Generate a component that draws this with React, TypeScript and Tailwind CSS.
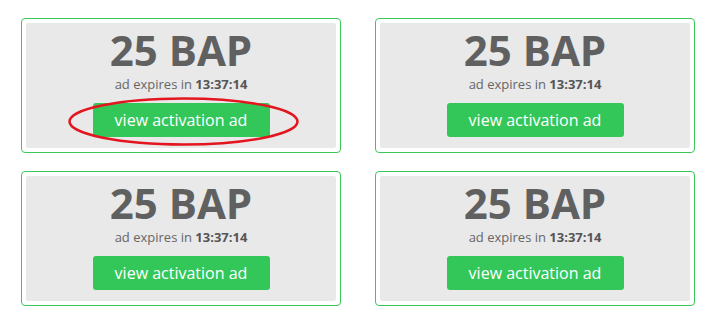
const ads = [
  { amount: 25, expires: "13:37:14", marked: true },
  { amount: 25, expires: "13:37:14", marked: false },
  { amount: 25, expires: "13:37:14", marked: false },
  { amount: 25, expires: "13:37:14", marked: false },
];

function Marker() {
  return (
    <svg
      className="pointer-events-none absolute left-[46px] top-[78px]"
      width="231"
      height="49"
      viewBox="0 0 231 49"
    >
      <ellipse cx="115.5" cy="24.5" rx="114" ry="23" fill="none" stroke="#e3161f" strokeWidth="2.5" />
    </svg>
  );
}

function AdCard({ amount, expires, marked }: { amount: number; expires: string; marked: boolean }) {
  return (
    <div className="relative h-[135px] w-[320px] rounded-[4px] border border-[#3cc75c] bg-white p-1">
      <div className="flex h-full flex-col items-center rounded-[2px] bg-[#e9e9e9]">
        <div className="mt-[6px] text-[42px] leading-[42px] font-bold text-[#606060]">{amount} BAP</div>
        <div className="mt-[4px] text-[13px] leading-[18px] text-[#666]">
          ad expires in <span className="font-bold text-[#555]">{expires}</span>
        </div>
        <button className="mt-[10px] h-[34px] w-[177px] rounded-[3px] bg-[#33c75a] text-[16px] leading-[34px] text-white">
          view activation ad
        </button>
      </div>
      {marked && <Marker />}
    </div>
  );
}

export default function App() {
  return (
    <div className="min-h-[315px] bg-white pl-[21px] pt-[18px] font-['Open_Sans',sans-serif]">
      <div className="grid grid-cols-[320px_320px] gap-x-[34px] gap-y-[18px]">
        {ads.map((ad, i) => (
          <AdCard key={i} {...ad} />
        ))}
      </div>
    </div>
  );
}
